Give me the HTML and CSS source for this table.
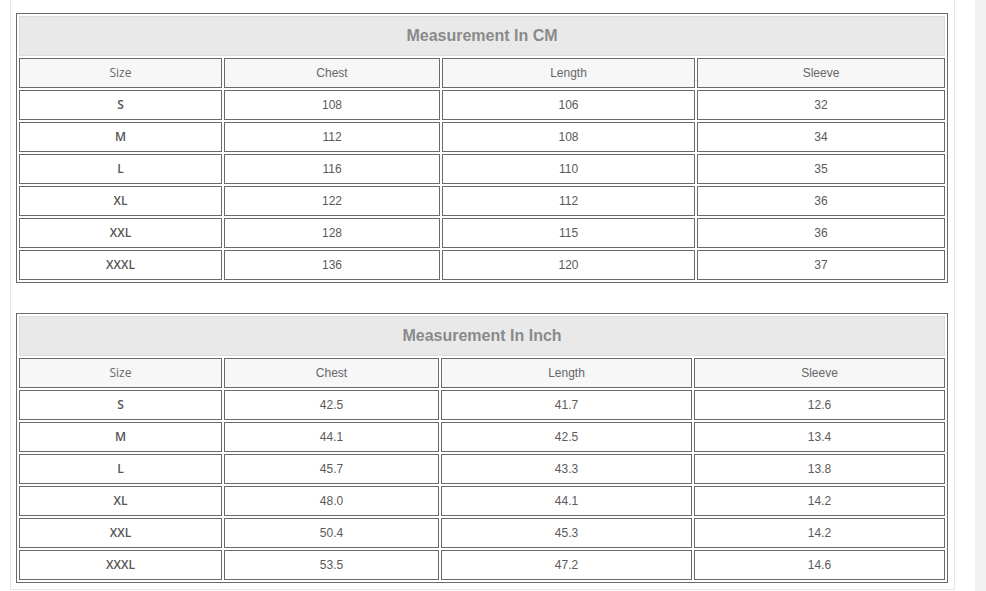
FILE: index.html
```html
<!DOCTYPE html>
<html>
<head>
<meta charset="utf-8">
<link rel="stylesheet" href="styles.css">
</head>
<body>
<div class="page">
  <div class="panel">
    <div class="chart cm">
      <div class="title">Measurement In CM</div>
      <div class="cell head size">Size</div><div class="cell head">Chest</div><div class="cell head">Length</div><div class="cell head">Sleeve</div>
      <div class="cell size val">S</div><div class="cell">108</div><div class="cell">106</div><div class="cell">32</div>
      <div class="cell size val">M</div><div class="cell">112</div><div class="cell">108</div><div class="cell">34</div>
      <div class="cell size val">L</div><div class="cell">116</div><div class="cell">110</div><div class="cell">35</div>
      <div class="cell size val">XL</div><div class="cell">122</div><div class="cell">112</div><div class="cell">36</div>
      <div class="cell size val">XXL</div><div class="cell">128</div><div class="cell">115</div><div class="cell">36</div>
      <div class="cell size val">XXXL</div><div class="cell">136</div><div class="cell">120</div><div class="cell">37</div>
    </div>
    <div class="chart inch">
      <div class="title">Measurement In Inch</div>
      <div class="cell head size">Size</div><div class="cell head">Chest</div><div class="cell head">Length</div><div class="cell head">Sleeve</div>
      <div class="cell size val">S</div><div class="cell">42.5</div><div class="cell">41.7</div><div class="cell">12.6</div>
      <div class="cell size val">M</div><div class="cell">44.1</div><div class="cell">42.5</div><div class="cell">13.4</div>
      <div class="cell size val">L</div><div class="cell">45.7</div><div class="cell">43.3</div><div class="cell">13.8</div>
      <div class="cell size val">XL</div><div class="cell">48.0</div><div class="cell">44.1</div><div class="cell">14.2</div>
      <div class="cell size val">XXL</div><div class="cell">50.4</div><div class="cell">45.3</div><div class="cell">14.2</div>
      <div class="cell size val">XXXL</div><div class="cell">53.5</div><div class="cell">47.2</div><div class="cell">14.6</div>
    </div>
  </div>
  <div class="gutter"></div>
</div>
</body>
</html>
```
FILE: styles.css
```css
html, body {
  margin: 0;
  padding: 0;
  background: #ffffff;
  height: 591px;
  overflow: hidden;
}
.page {
  display: flex;
  height: 591px;
  padding-left: 10px;
  box-sizing: border-box;
}
.panel {
  width: 945px;
  box-sizing: border-box;
  border-left: 1px solid #e6e6e6;
  border-right: 1px solid #e6e6e6;
  border-bottom: 1px solid #e6e6e6;
  padding: 13px 6px 6px 5px;
  display: flex;
  flex-direction: column;
  gap: 30px;
  align-self: flex-start;
}
.gutter {
  margin-left: auto;
  width: 11px;
  background: #f1f1f1;
}
.chart {
  display: grid;
  gap: 2px;
  padding: 2px;
  border: 1px solid #6a6a6a;
  width: 932px;
  box-sizing: border-box;
}
.chart.cm {
  grid-template-columns: 203px 216px 253px 248px;
}
.chart.inch {
  grid-template-columns: 203px 215px 251px 251px;
}
.title {
  grid-column: 1 / -1;
  height: 40px;
  box-sizing: border-box;
  border: 1px solid #dcdcdc;
  background: #e9e9e9;
  display: flex;
  align-items: center;
  justify-content: center;
  font-family: "Liberation Sans", Arial, sans-serif;
  font-weight: bold;
  font-size: 16px;
  color: #8a8a8a;
}
.cell {
  height: 30px;
  box-sizing: border-box;
  border: 1px solid #6a6a6a;
  background: #ffffff;
  display: flex;
  align-items: center;
  justify-content: center;
  font-family: "Liberation Sans", Arial, sans-serif;
  font-size: 12px;
  color: #5a5a5a;
}
.cell.head {
  background: #f7f7f7;
  color: #666666;
}
.cell.size {
  font-family: "Open Sans", "Liberation Sans", sans-serif;
  font-size: 12px;
  padding-bottom: 2px;
}
.cell.size.val {
  font-weight: 600;
  color: #555555;
}
.cell.head.size {
  color: #6a6a6a;
}
```
